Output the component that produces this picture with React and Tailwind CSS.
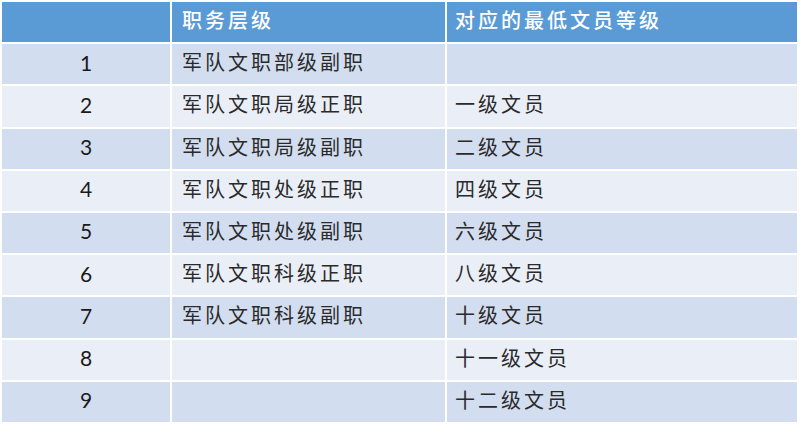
const rows = [
  ["1", "军队文职部级副职", ""],
  ["2", "军队文职局级正职", "一级文员"],
  ["3", "军队文职局级副职", "二级文员"],
  ["4", "军队文职处级正职", "四级文员"],
  ["5", "军队文职处级副职", "六级文员"],
  ["6", "军队文职科级正职", "八级文员"],
  ["7", "军队文职科级副职", "十级文员"],
  ["8", "", "十一级文员"],
  ["9", "", "十二级文员"],
]

const cjk = "font-['Noto_Sans_CJK_SC','Noto_Sans',sans-serif]"

export default function App() {
  return (
    <div className="w-[800px] h-[426px] bg-white p-[2px]">
      <div className="grid h-[420px] w-[795px] grid-cols-[168px_273px_1fr] grid-rows-[repeat(10,1fr)] gap-[2px]">
        {/* Header */}
        <div className="bg-[#5b9bd5]" />
        <div className={`bg-[#5b9bd5] flex items-center pl-[10px] pb-1 text-white text-[20px] font-medium tracking-[3px] ${cjk}`}>
          职务层级
        </div>
        <div className={`bg-[#5b9bd5] flex items-center pl-[8px] pb-1 text-white text-[20px] font-medium tracking-[3px] ${cjk}`}>
          对应的最低文员等级
        </div>

        {rows.map((r, i) => {
          const bg = i % 2 === 0 ? "bg-[#d2deef]" : "bg-[#eaeff7]"
          return [
            <div
              key={`a${i}`}
              className={`${bg} flex items-center justify-center pb-1 text-[21px] text-[#1a1a1a] font-['Lato','Open_Sans',sans-serif]`}
            >
              {r[0]}
            </div>,
            <div
              key={`b${i}`}
              className={`${bg} flex items-center pl-[10px] pb-1 text-[20px] tracking-[3px] text-[#2a2a2a] ${cjk}`}
            >
              {r[1]}
            </div>,
            <div
              key={`c${i}`}
              className={`${bg} flex items-center pl-[8px] pb-1 text-[20px] tracking-[3px] text-[#2a2a2a] ${cjk}`}
            >
              {r[2]}
            </div>,
          ]
        })}
      </div>
    </div>
  )
}
